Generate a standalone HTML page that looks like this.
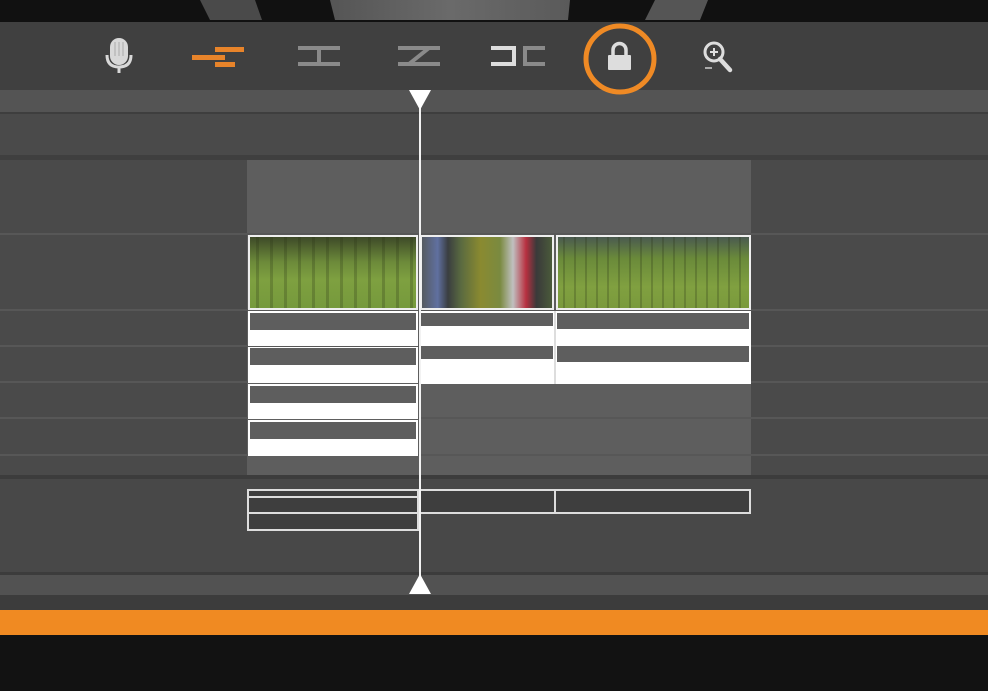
<!DOCTYPE html>
<html><head><style>
body{margin:0;width:988px;height:691px;position:relative;overflow:hidden;background:#121212;font-family:"Liberation Sans",sans-serif}
div{position:absolute;box-sizing:border-box}
.w{background:#fff}
.g{background:#5e5e5e}
</style></head><body>
<div style="left:0;top:0;width:988px;height:22px;background:#111"></div>
<svg style="position:absolute;left:0;top:0" width="988" height="22">
<defs><linearGradient id="gr" x1="0" x2="1"><stop offset="0" stop-color="#555"/><stop offset="0.5" stop-color="#6a6a6a"/><stop offset="1" stop-color="#5a5a5a"/></linearGradient></defs>
<polygon points="200,0 255,0 262,20 210,20" fill="#4a4a4a"/>
<polygon points="330,0 570,0 568,20 335,20" fill="url(#gr)"/>
<polygon points="655,0 708,0 700,20 645,20" fill="#555"/>
</svg>
<div style="left:0;top:22px;width:988px;height:68px;background:#404040"></div>
<!-- ruler -->
<div style="left:0;top:90px;width:988px;height:22px;background:#545454"></div>
<div style="left:0;top:112px;width:988px;height:2px;background:#3e3e3e"></div>
<div style="left:0;top:114px;width:988px;height:42px;background:#4a4a4a"></div>
<div style="left:0;top:155px;width:988px;height:5px;background:#3f3f3f"></div>
<svg style="position:absolute;left:0;top:22px" width="988" height="80">
<rect x="110" y="16" width="18" height="27" rx="9" fill="#d8d8d8"/>
<path d="M107 33 q0 12 12 12 q12 0 12 -12" stroke="#d8d8d8" stroke-width="3" fill="none"/>
<rect x="117.5" y="44" width="3" height="7" fill="#d8d8d8"/>
<line x1="115" y1="20" x2="115" y2="34" stroke="#aaa"/><line x1="119" y1="20" x2="119" y2="34" stroke="#aaa"/><line x1="123" y1="20" x2="123" y2="34" stroke="#aaa"/>
<rect x="215" y="25" width="29" height="5" fill="#e8842a"/>
<rect x="192" y="33" width="33" height="5" fill="#e8842a"/>
<rect x="215" y="40" width="20" height="5" fill="#e8842a"/>
<path d="M298 26h42M298 42h42M319 26v16" stroke="#8a8a8a" stroke-width="4" fill="none"/>
<path d="M398 26h42M398 42h42M429 26l-20 16" stroke="#8a8a8a" stroke-width="4" fill="none"/>
<path d="M491 26h23v16h-23" stroke="#ddd" stroke-width="4" fill="none"/>
<path d="M545 26h-20v16h20" stroke="#8a8a8a" stroke-width="4" fill="none"/>
<ellipse cx="620" cy="37" rx="34" ry="33" fill="none" stroke="#ef8a25" stroke-width="5"/>
<path d="M613 35v-7a6 6 0 0 1 13 0v7" stroke="#ddd" stroke-width="3.5" fill="none"/>
<rect x="608" y="33" width="23" height="15" rx="1" fill="#ddd"/>
<circle cx="714" cy="30" r="9" stroke="#ddd" stroke-width="3" fill="none"/>
<path d="M710 30h8M714 26v8" stroke="#ddd" stroke-width="2"/>
<path d="M720 37l10 11" stroke="#ddd" stroke-width="4.5" stroke-linecap="round"/>
<path d="M705 46h7" stroke="#aaa" stroke-width="2"/>
</svg>
<div style="left:0;top:160px;width:988px;height:315px;background:#4a4a4a"></div>
<div style="left:247px;top:160px;width:504px;height:315px;background:#5e5e5e"></div>
<div style="left:0;top:233px;width:988px;height:2px;background:#575757"></div>
<div style="left:0;top:309px;width:988px;height:2px;background:#575757"></div>
<div style="left:0;top:345px;width:988px;height:2px;background:#575757"></div>
<div style="left:0;top:381px;width:988px;height:2px;background:#575757"></div>
<div style="left:0;top:417px;width:988px;height:2px;background:#575757"></div>
<div style="left:0;top:454px;width:988px;height:2px;background:#575757"></div>
<div style="left:248px;top:235px;width:170px;height:75px;border:2px solid #eee;background:repeating-linear-gradient(90deg,rgba(0,0,0,0) 0 6px,rgba(40,50,20,.25) 6px 9px,rgba(0,0,0,0) 9px 14px),linear-gradient(180deg,#3e4a28 0%,#6c8a3a 35%,#7ea040 60%,#769a3c 100%)"></div>
<div style="left:420px;top:235px;width:134px;height:75px;border:2px solid #eee;background:linear-gradient(90deg,#555a60 0%,#6070a0 12%,#3a3e40 20%,#5a6a40 30%,#8a8a30 45%,#7a8a40 60%,#c0c0c0 70%,#b83040 80%,#3a3a3a 88%,#4a5a3a 100%)"></div>
<div style="left:556px;top:235px;width:195px;height:75px;border:2px solid #eee;background:repeating-linear-gradient(90deg,rgba(0,0,0,0) 0 5px,rgba(40,50,20,.25) 5px 7px,rgba(0,0,0,0) 7px 11px),linear-gradient(180deg,#4a5a50 0%,#6a8a3a 30%,#80a040 70%,#7a9a3c 100%)"></div>
<div class="w" style="left:248px;top:311px;width:170px;height:35px"><div class="g" style="left:2px;top:2px;width:166px;height:17px"></div></div>
<div class="w" style="left:248px;top:347px;width:170px;height:36px"><div class="g" style="left:2px;top:1px;width:166px;height:17px"></div></div>
<div class="w" style="left:248px;top:384px;width:170px;height:35px"><div class="g" style="left:2px;top:2px;width:166px;height:17px"></div></div>
<div class="w" style="left:248px;top:420px;width:170px;height:36px"><div class="g" style="left:2px;top:2px;width:166px;height:17px"></div></div>
<div class="w" style="left:420px;top:311px;width:331px;height:73px">
<div class="g" style="left:1px;top:2px;width:132px;height:13px"></div>
<div class="g" style="left:137px;top:2px;width:192px;height:16px"></div>
<div class="g" style="left:1px;top:35px;width:132px;height:13px"></div>
<div class="g" style="left:137px;top:35px;width:192px;height:16px"></div>
<div style="left:134px;top:0;width:2px;height:73px;background:#ddd"></div>
</div>
<div style="left:0;top:475px;width:988px;height:4px;background:#3c3c3c"></div>
<div style="left:0;top:479px;width:988px;height:93px;background:#484848"></div>
<div style="left:247px;top:489px;width:172px;height:42px;border:2px solid #ddd;background:#3e3e3e"></div>
<div style="left:247px;top:496px;width:172px;height:2px;background:#ddd"></div>
<div style="left:247px;top:512px;width:172px;height:2px;background:#ddd"></div>
<div style="left:419px;top:489px;width:137px;height:25px;border:2px solid #ddd;border-left:none;background:#3e3e3e"></div>
<div style="left:554px;top:489px;width:197px;height:25px;border:2px solid #ddd;background:#3e3e3e"></div>
<div style="left:0;top:572px;width:988px;height:3px;background:#3c3c3c"></div>
<div style="left:0;top:575px;width:988px;height:20px;background:#525252"></div>
<div style="left:0;top:595px;width:988px;height:15px;background:#3c3c3c"></div>
<div style="left:0;top:610px;width:988px;height:25px;background:#f08a22"></div>
<div style="left:0;top:635px;width:988px;height:56px;background:#121212"></div>
<div style="left:419px;top:100px;width:2px;height:490px;background:#f2f2f2"></div>
<svg style="position:absolute;left:408px;top:89px" width="24" height="22"><polygon points="1,1 23,1 12,21" fill="#fff"/></svg>
<svg style="position:absolute;left:408px;top:573px" width="24" height="22"><polygon points="12,1 23,21 1,21" fill="#fff"/></svg>
</body></html>
